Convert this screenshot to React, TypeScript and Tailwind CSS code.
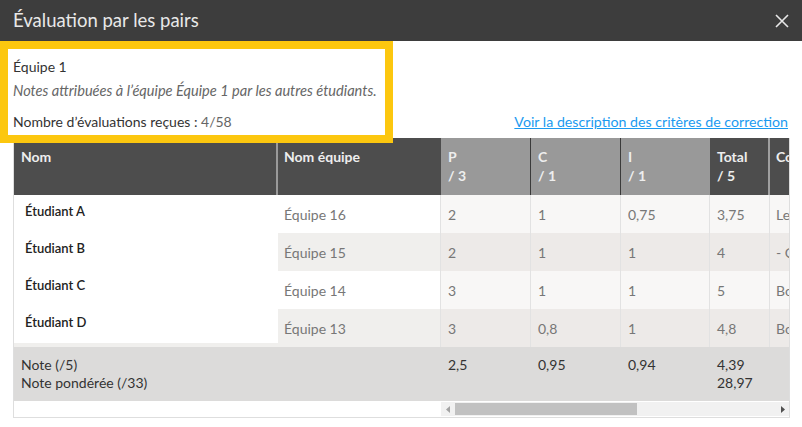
import React from 'react';

const rows = [
  { nom: 'Étudiant A', equipe: 'Équipe 16', p: '2', c: '1', i: '0,75', total: '3,75', co: 'Les' },
  { nom: 'Étudiant B', equipe: 'Équipe 15', p: '2', c: '1', i: '1', total: '4', co: '- C' },
  { nom: 'Étudiant C', equipe: 'Équipe 14', p: '3', c: '1', i: '1', total: '5', co: 'Bon' },
  { nom: 'Étudiant D', equipe: 'Équipe 13', p: '3', c: '0,8', i: '1', total: '4,8', co: 'Bon' },
];

const CloseIcon = () => (
  <svg width="16" height="16" viewBox="0 0 16 16" fill="none" stroke="#e8e8e8" strokeWidth="1.6">
    <path d="M2 2 L14 14 M14 2 L2 14" />
  </svg>
);

export default function App() {
  return (
    <div className="w-[802px] h-[427px] bg-white overflow-hidden font-['Lato','Open_Sans',sans-serif] text-[#333]">
      {/* Title bar */}
      <div className="h-[41px] bg-[#3d3d3d] flex items-center justify-between pl-[13px] pr-[12px]">
        <h1 className="text-[18.5px] text-[#e8e8e8] leading-none">Évaluation par les pairs</h1>
        <CloseIcon />
      </div>

      {/* Info + link */}
      <div className="flex items-end justify-between pr-[14px]">
        <div className="relative z-10 w-[393px] h-[102px] border-8 border-[#fcc70f] bg-white pl-[5px] pt-[9px]">
          <div className="text-[14px] leading-[18px] text-[#333]">Équipe 1</div>
          <div className="text-[14.6px] leading-[18px] italic text-[#666] mt-[6px] whitespace-nowrap">
            Notes attribuées à l’équipe Équipe 1 par les autres étudiants.
          </div>
          <div className="text-[14px] leading-[18px] text-[#333] mt-[13px]">
            Nombre d’évaluations reçues : <span className="text-[#666]">4/58</span>
          </div>
        </div>
        <a href="#" className="text-[14.2px] leading-[18px] text-[#1b9af0] underline mb-[12px]">
          Voir la description des critères de correction
        </a>
      </div>

      {/* Table */}
      <div className="-mt-[5px] ml-[13px] w-[777px] border border-[#dedede] border-t-0 text-[14px]">
        <div className="flex">
          {/* Frozen column */}
          <div className="w-[264px] flex flex-col bg-[#f0efed]">
            <div className="h-[57px] bg-[#4d4d4d] border-r-2 border-[#9a9a9a] px-[7px] pt-[9px] font-bold text-[#eee] leading-[19px]">
              Nom
            </div>
            {rows.map((r) => (
              <div key={r.nom} className="h-[37px] bg-white pl-[11px] pt-[7px] text-[13px] font-semibold text-[#222] leading-[18px]">
                {r.nom}
              </div>
            ))}
          </div>

          {/* Scrolling columns */}
          <div className="flex-1 overflow-hidden">
            <div className="w-[600px]">
              <div className="flex h-[57px] font-bold text-[#eee] leading-[19px]">
                <div className="w-[163px] bg-[#4d4d4d] px-[6px] pt-[9px]">Nom équipe</div>
                <div className="w-[90px] bg-[#999] border-r border-[#3a3a3a] px-[7px] pt-[9px]">
                  P<br />/ 3
                </div>
                <div className="w-[90px] bg-[#999] border-r border-[#3a3a3a] px-[7px] pt-[9px]">
                  C<br />/ 1
                </div>
                <div className="w-[89px] bg-[#999] px-[7px] pt-[9px]">
                  I<br />/ 1
                </div>
                <div className="w-[60px] bg-[#4d4d4d] border-r-2 border-[#a0a0a0] px-[7px] pt-[9px]">
                  Total<br />/ 5
                </div>
                <div className="w-[100px] bg-[#4d4d4d] px-[6px] pt-[9px]">Commentaire</div>
              </div>
              {rows.map((r, idx) => (
                <div
                  key={r.equipe}
                  className={`flex h-[38px] items-center text-[#777] ${idx % 2 === 0 ? 'bg-[#f8f7f6]' : 'bg-[#edeae8]'}`}
                >
                  <div className={`w-[163px] h-full flex items-center px-[6px] border-r border-[#e2e2e2] ${idx % 2 === 0 ? 'bg-white' : 'bg-[#f0efed]'}`}>
                    {r.equipe}
                  </div>
                  <div className="w-[90px] h-full flex items-center px-[7px] border-r border-[#e2e2e2]">{r.p}</div>
                  <div className="w-[90px] h-full flex items-center px-[7px] border-r border-[#e2e2e2]">{r.c}</div>
                  <div className="w-[89px] h-full flex items-center px-[7px] border-r border-[#e2e2e2]">{r.i}</div>
                  <div className="w-[60px] h-full flex items-center px-[7px] border-r border-[#e2e2e2]">{r.total}</div>
                  <div className="w-[100px] h-full flex items-center px-[6px] whitespace-nowrap">{r.co}</div>
                </div>
              ))}
            </div>
          </div>
        </div>

        {/* Footer */}
        <div className="flex h-[54px] bg-[#dcdbda] text-[#333] leading-[18px] pt-[9px]">
          <div className="w-[427px] px-[7px]">
            Note (/5)
            <br />
            Note pondérée (/33)
          </div>
          <div className="w-[90px] px-[7px]">2,5</div>
          <div className="w-[90px] px-[7px]">0,95</div>
          <div className="w-[89px] px-[7px]">0,94</div>
          <div className="w-[60px] px-[7px]">
            4,39
            <br />
            28,97
          </div>
        </div>

        {/* Scrollbar */}
        <div className="flex h-[16px] items-center">
          <div className="w-[427px]" />
          <div className="flex-1 h-[14px] bg-[#f1f1f1] flex items-center">
            <div className="w-[14px] flex justify-center">
              <svg width="5" height="7" viewBox="0 0 5 7"><path d="M4 0 L0 3.5 L4 7 Z" fill="#a3a3a3" /></svg>
            </div>
            <div className="w-[182px] h-[12px] bg-[#c1c1c1]" />
            <div className="flex-1" />
            <div className="w-[14px] flex justify-center">
              <svg width="5" height="7" viewBox="0 0 5 7"><path d="M1 0 L5 3.5 L1 7 Z" fill="#505050" /></svg>
            </div>
          </div>
        </div>
      </div>
    </div>
  );
}
